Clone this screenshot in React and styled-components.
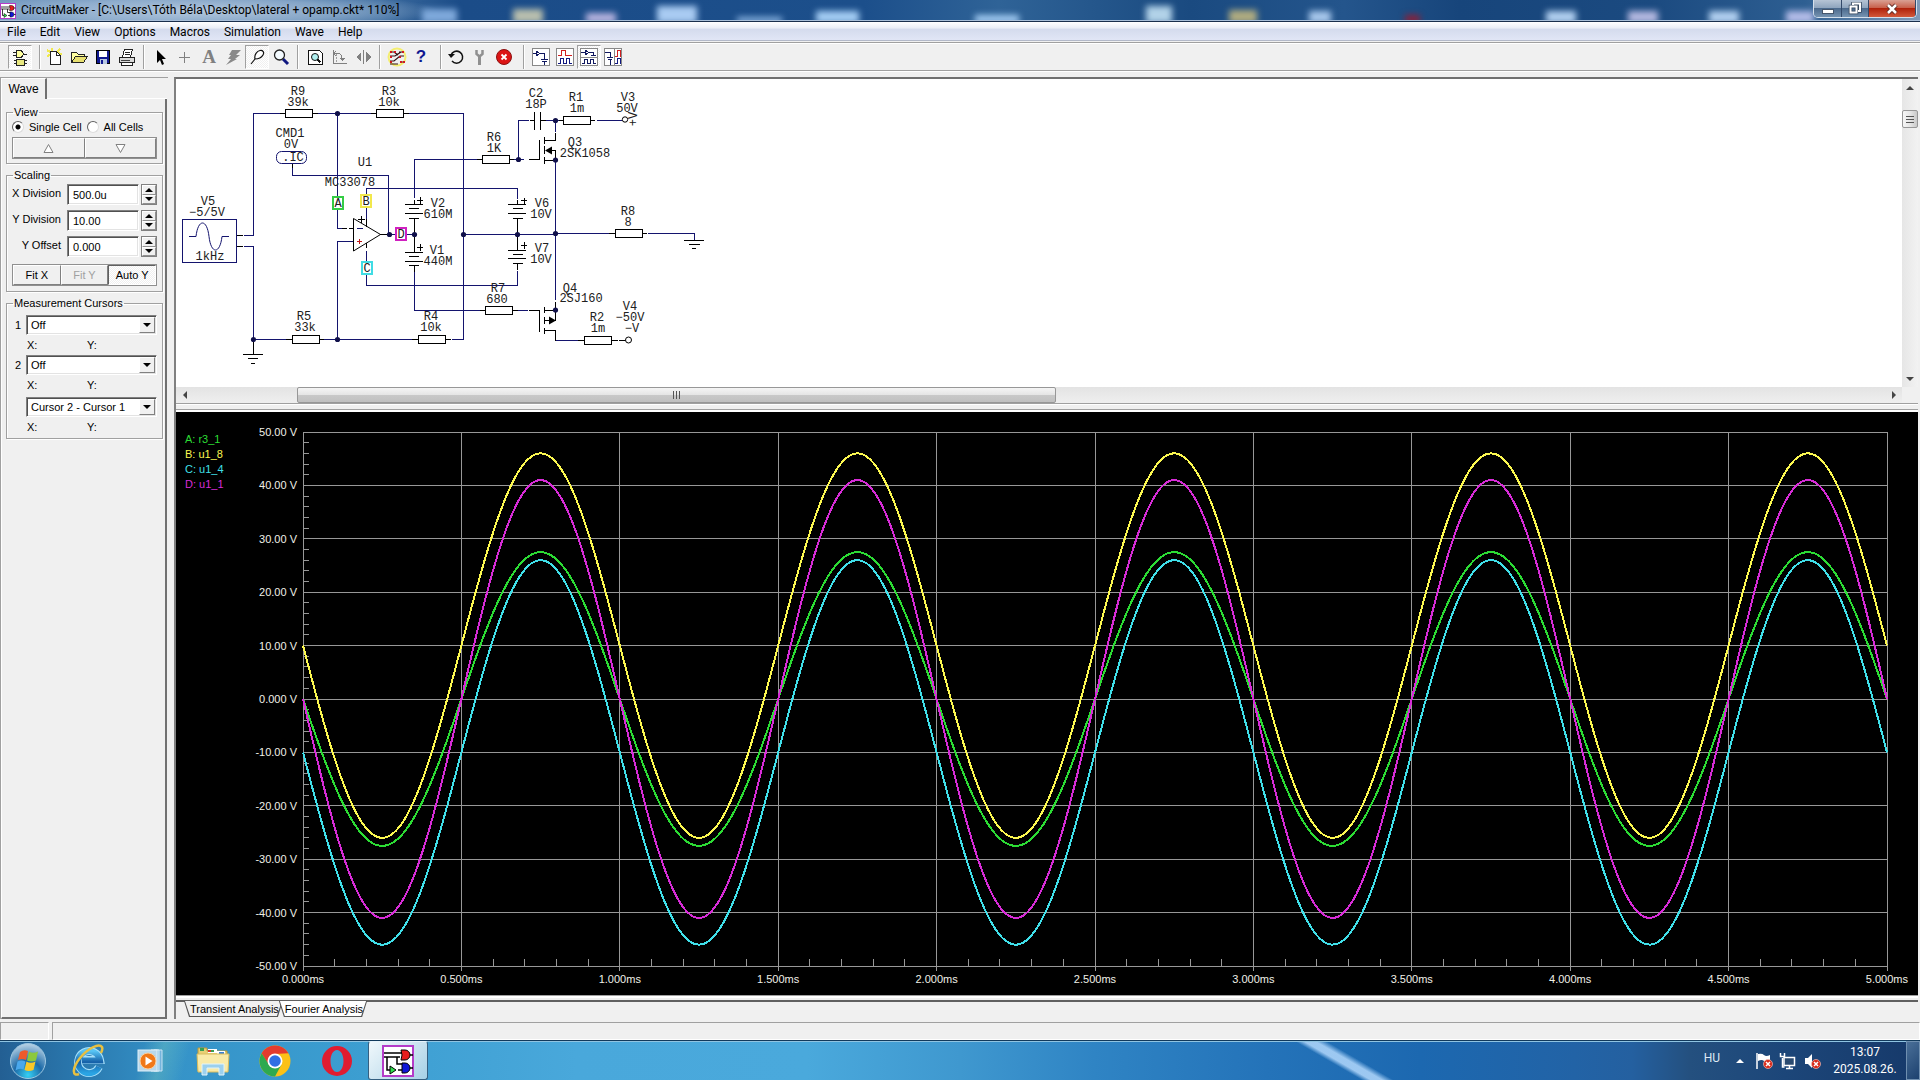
import React from "react";
import styled, { createGlobalStyle, css } from "styled-components";

const SANS = '"Liberation Sans", Arial, sans-serif';
const SHELL = 'Roboto, "Noto Sans", sans-serif';
const MONO = '"Liberation Mono", "Courier New", monospace';
const NAVY = "#14146e";

const GlobalStyle = createGlobalStyle`
  *, *::before, *::after { box-sizing: border-box; }
  html, body, #root { margin: 0; height: 100%; }
  body { background: #f0f0f0; color: #000; font: 11px/14px ${SANS}; overflow: hidden; }
  button, input, select { font: inherit; color: inherit; margin: 0; padding: 0; border-radius: 0; }
  svg { display: block; }
`;

const Desktop = styled.div`
  display: flex;
  flex-direction: column;
  height: 100vh;
  min-height: 640px;
  background: #f0f0f0;
`;

/* ---------- title bar ---------- */

const TitleBar = styled.header`
  display: flex;
  align-items: stretch;
  height: 22px;
  flex: none;
  border-bottom: 1px solid #1a2f4c;
  box-shadow: inset 0 -1px 0 #a9bfd8;
  background:
    radial-gradient(ellipse 240px 20px at 200px 11px, rgba(196, 212, 230, 0.85), rgba(170, 195, 220, 0.6) 60%, transparent 100%),
    linear-gradient(90deg, #7297bf 0, #3d6c9f 380px, #1b4c88 460px, #1c4f8b 45%, #2f6397 52%, #1a4a80 62%, #24558c 70%, #17457b 76%, #1b4a80 86%, #2e5f92 94%, #7f9ab8 100%);
  position: relative;
`;

const Glints = styled.div`
  position: absolute;
  inset: 0 0 1px;
  overflow: hidden;
`;

const Glint = styled.i`
  position: absolute;
  bottom: -3px;
  left: ${(p) => p.$x}%;
  width: ${(p) => p.$w}px;
  height: ${(p) => p.$h}px;
  background: ${(p) => p.$c};
  filter: blur(3px);
`;

const Title = styled.h1`
  display: flex;
  align-items: center;
  gap: 5px;
  flex: 1;
  margin: 0;
  font: 12px/21px ${SHELL};
  white-space: pre;
  position: relative;
`;

const WindowButtons = styled.div`
  display: flex;
  height: 18px;
  margin-right: 3px;
  border: 1px solid #d5e0ec;
  border-top: 0;
  border-radius: 0 0 5px 5px;
  overflow: hidden;
  position: relative;
`;

const WindowButton = styled.button`
  width: ${(p) => p.$w}px;
  display: grid;
  place-items: center;
  border: 0;
  border-right: 1px solid #33496a;
  background: ${(p) =>
    p.$close
      ? "linear-gradient(#d9a093, #c8614c 45%, #b0220b 50%, #d2593a)"
      : "linear-gradient(#b6c4d5, #8fa5be 45%, #4c6a8d 50%, #7593b1)"};
`;

/* ---------- menu and toolbar ---------- */

const MenuBar = styled.nav`
  display: flex;
  height: 19px;
  flex: none;
  margin-bottom: 1px;
  border-bottom: 1px solid #b2b8c8;
  background: linear-gradient(#fff, #e9edf6 35%, #d4dbed 38%, #e1e6f6);
`;

const MenuItem = styled.button`
  border: 0;
  background: none;
  padding: 2px 7px 0;
  font: 12px/16px ${SHELL};
`;

const Toolbar = styled.div`
  display: flex;
  align-items: center;
  height: 30px;
  flex: none;
  padding-left: 8px;
  margin-bottom: 5px;
  border-top: 1px solid #a0a0a0;
  border-bottom: 1px solid #fff;
  box-shadow: inset 0 1px 0 #fff, inset 0 -1px 0 #a0a0a0;
`;

const Group = styled.div`
  display: flex;
`;

const Separator = styled.i`
  width: 2px;
  height: 24px;
  margin: 0 ${(p) => p.$after}px 0 ${(p) => p.$before}px;
  border-left: 1px solid #a0a0a0;
  border-right: 1px solid #fff;
`;

const checker = css`
  background: repeating-conic-gradient(#fff 0 25%, #f0f0f0 0 50%) 0 0 / 2px 2px;
`;

const Tool = styled.button`
  width: 24px;
  height: 24px;
  display: grid;
  place-items: center;
  border: 1px solid transparent;
  background: none;
  ${(p) =>
    p.$pressed &&
    css`
      ${checker}
      border-color: #a0a0a0 #fff #fff #a0a0a0;
    `}
`;

/* ---------- work area ---------- */

const Workspace = styled.main`
  display: flex;
  flex: 1;
  min-height: 0;
  gap: 6px;
  padding: 0 2px 3px 0;
`;

const Sidebar = styled.aside`
  display: flex;
  flex-direction: column;
  width: 168px;
  flex: none;
  padding: 0 1px 0 0;
  border-top: 1px solid #a0a0a0;
  border-left: 1px solid #a0a0a0;
`;

const TabRow = styled.div`
  display: flex;
  height: 21px;
`;

const SideTab = styled.button`
  width: 46px;
  border: 0;
  border-top: 1px solid #fff;
  border-left: 1px solid #fff;
  border-right: 2px solid #707070;
  background: #f0f0f0;
  font-size: 12px;
`;

const TabFill = styled.i`
  flex: 1;
  border-bottom: 1px solid #fff;
`;

const TabPage = styled.div`
  display: flex;
  flex-direction: column;
  gap: 4px;
  flex: 1;
  padding: 6px 2px 0 4px;
  border-left: 1px solid #fff;
  border-right: 2px solid #707070;
  border-bottom: 2px solid #707070;
`;

const GroupBox = styled.fieldset`
  margin: 0;
  padding: 0 5px ${(p) => p.$pad}px;
  min-width: 0;
  border: 1px solid #a0a0a0;
  box-shadow: 1px 1px 0 #fff, inset 1px 1px 0 #fff;
`;

const Legend = styled.legend`
  margin-left: 1px;
  padding: 0 1px;
  height: 14px;
  line-height: 14px;
`;

const RadioRow = styled.div`
  display: flex;
  gap: 5px;
  height: 16px;
`;

const RadioLabel = styled.label`
  display: flex;
  align-items: center;
  gap: 5px;
  white-space: nowrap;
`;

const Radio = styled.input`
  appearance: none;
  width: 12px;
  height: 12px;
  border: 1px solid;
  border-color: #606060 #ddd #ddd #606060;
  border-radius: 50%;
  background: #fff;
  &:checked {
    background: radial-gradient(circle, #000 2px, #fff 3px);
  }
`;

const ButtonRow = styled.div`
  display: flex;
  margin-top: ${(p) => p.$top}px;
  border: 1px solid #909090;
`;

const PushButton = styled.button`
  flex: 1;
  height: 20px;
  display: grid;
  place-items: center;
  border: 1px solid;
  border-color: #fff #808080 #808080 #fff;
  background: #f0f0f0;
  font-size: 11px;
  color: ${(p) => (p.disabled ? "#a0a0a0" : "#000")};
  ${(p) =>
    p.$pressed &&
    css`
      ${checker}
      border-color: #606060 #fff #fff #606060;
    `}
`;

const FieldRow = styled.div`
  display: flex;
  align-items: center;
  margin-top: ${(p) => p.$top}px;
  height: 21px;
`;

const FieldLabel = styled.label`
  flex: 1;
  text-align: right;
  padding-right: 6px;
  line-height: 18px;
  align-self: flex-start;
  white-space: nowrap;
`;

const sunken = css`
  border: 1px solid;
  border-color: #808080 #fff #fff #808080;
  box-shadow: inset 1px 1px 0 #505050, inset -1px -1px 0 #e3e3e3;
  background: #fff;
`;

const Field = styled.input`
  width: 72px;
  height: 21px;
  padding-left: 5px;
  ${sunken}
`;

const Spinner = styled.div`
  display: flex;
  flex-direction: column;
  width: 16px;
  height: 21px;
  margin-left: 2px;
  border: 1px solid #808080;
`;

const SpinButton = styled.button`
  flex: 1;
  min-height: 0;
  display: grid;
  place-items: center;
  border: 1px solid;
  border-color: #fff #909090 #909090 #fff;
  background: #f0f0f0;
`;

const CursorBlock = styled.div`
  display: grid;
  grid-template-columns: 14px 1fr;
  align-items: center;
  margin-top: ${(p) => p.$top}px;
`;

const CursorLabel = styled.label`
  padding-left: 3px;
`;

const SelectBox = styled.div`
  display: flex;
  height: 20px;
  ${sunken}
  padding: 1px;
`;

const Select = styled.select`
  flex: 1;
  width: 100%;
  appearance: none;
  border: 0;
  padding-left: 3px;
  background: #fff;
`;

const SelectArrow = styled.i`
  display: grid;
  place-items: center;
  width: 16px;
  flex: none;
  border: 1px solid;
  border-color: #fff #808080 #808080 #fff;
  background: #f0f0f0;
  pointer-events: none;
`;

const Readout = styled.div`
  grid-column: 2;
  display: grid;
  grid-template-columns: 60px 1fr;
  height: 20px;
  line-height: 20px;
  padding-left: 1px;
`;

/* ---------- panes ---------- */

const Panes = styled.section`
  flex: 1;
  min-width: 0;
  display: flex;
  flex-direction: column;
  border-left: 2px solid #808080;
  border-top: 2px solid #707070;
`;

const SchematicPane = styled.div`
  display: grid;
  grid-template-columns: 1fr 16px;
  grid-template-rows: 308px 16px;
  flex: none;
  background: #f0f0f0;
`;

const Sheet = styled.div`
  overflow: hidden;
  background: #fff;
`;

const VScroll = styled.div`
  display: grid;
  grid-template-rows: 17px 14px 18px 1fr 17px;
  justify-items: stretch;
  background: linear-gradient(90deg, #e6e6e6, #f2f2f2);
`;

const HScroll = styled.div`
  display: grid;
  grid-template-columns: 17px 6fr 44fr 48fr 17px;
  background: linear-gradient(#e3e3e3, #efefef);
`;

const ScrollArrow = styled.button`
  display: grid;
  place-items: center;
  border: 0;
  background: none;
`;

const Thumb = styled.div`
  display: grid;
  place-items: center;
  border: 1px solid #979797;
  border-radius: 2px;
  background: ${(p) =>
    p.$vertical
      ? "linear-gradient(90deg, #f5f5f5, #e6e6e6 50%, #c9c9c9)"
      : "linear-gradient(#f5f5f5, #e4e4e4 50%, #c8c8c8 52%, #c0c0c0)"};
`;

const Splitter = styled.div`
  height: 9px;
  flex: none;
  border-top: 1px solid #a0a0a0;
  border-bottom: 2px solid #fff;
  box-shadow: inset 0 1px 0 #fff, inset 0 -1px 0 #a0a0a0;
  background: #f0f0f0;
`;

const Scope = styled.div`
  flex: 1;
  min-height: 0;
  display: grid;
  grid-template-columns: 70px 51px 6px 1fr 31px;
  grid-template-rows: 20px 1fr 29px;
  background: #000;
  color: #f0f0e8;
`;

const TraceList = styled.ul`
  grid-area: 2 / 1;
  list-style: none;
  margin: 0;
  padding: 0 0 0 9px;
  line-height: 15px;
`;

const Trace = styled.li`
  color: ${(p) => p.$c};
`;

const YAxis = styled.div`
  grid-area: 2 / 2;
  display: flex;
  flex-direction: column;
  justify-content: space-between;
  text-align: right;
`;

const YLabel = styled.span`
  height: 0;
  line-height: 0;
  white-space: nowrap;
`;

const XAxis = styled.div`
  grid-area: 3 / 4;
  display: flex;
  justify-content: space-between;
  padding-top: 6px;
`;

const XLabel = styled.span`
  width: 0;
  display: flex;
  justify-content: center;
  white-space: nowrap;
`;

const Plot = styled.svg`
  grid-area: 2 / 4;
  width: 100%;
  height: 100%;
  overflow: visible;
`;

const SheetTabs = styled.div`
  display: flex;
  height: 24px;
  flex: none;
  padding: 6px 0 0 8px;
  background:
    linear-gradient(#606060, #606060) 0 5px / 100% 2px no-repeat,
    linear-gradient(#a0a0a0 1px, #fff 1px, #fff 3px, #f0f0f0 3px);
`;

const SheetTab = styled.button`
  position: relative;
  height: 16px;
  padding: 0 4px 0 6px;
  margin-right: -4px;
  border: 0;
  background: none;
  line-height: 16px;
  white-space: nowrap;
  &::before {
    content: "";
    position: absolute;
    inset: 0;
    background: #555;
    clip-path: polygon(0 0, 100% 0, calc(100% - 5px) 100%, 5px 100%);
  }
  &::after {
    content: "";
    position: absolute;
    inset: 0 1px 1px 1px;
    background: ${(p) => (p.$active ? "#f0f0f0" : "#fff")};
    clip-path: polygon(0 0, 100% 0, calc(100% - 5px) 100%, 5px 100%);
  }
`;

const SheetTabText = styled.span`
  position: relative;
  z-index: 1;
`;

const StatusBar = styled.footer`
  display: flex;
  gap: 3px;
  height: 18px;
  flex: none;
`;

const StatusCell = styled.div`
  width: ${(p) => (p.$w ? p.$w + "px" : "auto")};
  flex: ${(p) => (p.$w ? "none" : 1)};
  border: 1px solid;
  border-color: #a0a0a0 #fff #fff #a0a0a0;
`;

/* ---------- taskbar ---------- */

const Taskbar = styled.div`
  display: flex;
  align-items: stretch;
  height: 40px;
  flex: none;
  border-top: 1px solid #123a5c;
  box-shadow: inset 0 1px 0 #8fc4e2;
  background:
    linear-gradient(30deg, transparent 43%, rgba(170, 210, 248, 0.9) 47%, rgba(170, 210, 248, 0.9) 52%, transparent 57%) 1264px 0 / 160px 100% no-repeat,
    linear-gradient(105deg, transparent 140px, rgba(150, 230, 190, 0.25) 160px, transparent 185px),
    linear-gradient(90deg, #235f93 0, #2a78ae 4%, #3593c8 9%, #3b9dd0 18%, #49a8db 30%, #4aa9dc 42%, #3f98cf 50%, #2f84c4 57%, #2473b9 66%, #1c68b0 74%, #2263a6 82%, #2460a0 85%, #24507f 88%, #1c4679 93%, #16396a 100%);
`;

const TaskButton = styled.button`
  width: ${(p) => p.$w}px;
  display: grid;
  place-items: center;
  border: 1px solid ${(p) => (p.$active ? "#355f80" : "transparent")};
  border-top-color: ${(p) => (p.$active ? "#e8f5fc" : "transparent")};
  border-radius: 3px;
  background: ${(p) => (p.$active ? "linear-gradient(135deg, #f0f8fc, #c5e0ee 60%, #a5d0e6)" : "none")};
`;

const Tray = styled.div`
  display: flex;
  align-items: center;
  margin-left: auto;
  color: #fff;
  font: 12px/17px ${SHELL};
`;

const Language = styled.span`
  margin-right: 16px;
  padding-bottom: 5px;
  color: #dfe9f3;
`;

const TrayIcons = styled.div`
  display: flex;
  margin-left: 8px;
`;

const TrayButton = styled.button`
  width: 24px;
  height: 24px;
  display: grid;
  place-items: center;
  border: 0;
  background: none;
`;

const Clock = styled.time`
  width: 82px;
  text-align: center;
  padding-top: 1px;
`;

const ShowDesktop = styled.button`
  width: 14px;
  align-self: stretch;
  border: 1px solid #6f8fb0;
  background: linear-gradient(135deg, #4a6f98, #1c416f);
`;

/* ---------- drawings ---------- */

const Crisp = ({ w = 20, h = 20, children }) => (
  <svg width={w} height={h} viewBox={`0 0 ${w} ${h}`} fill="none" shapeRendering="crispEdges" aria-hidden="true">
    {children}
  </svg>
);

const AppIcon = ({ size }) => (
  <svg width={size} height={size} viewBox="0 0 32 32" fill="none" aria-hidden="true">
    <rect x="1" y="1" width="30" height="30" fill="#fff" stroke="#b43cc8" strokeWidth="2" />
    <path d="M2 8h18M2 12h16M5 12v13h3M15 12v7h5M28 10h3M28 23h3M16 25h4" stroke="#000" strokeWidth="1.5" />
    <path d="M19 5h4a5 5 0 0 1 0 10h-4q2-5 0-10z" fill="#e81c1c" stroke="#000" />
    <path d="M20 18h3a5 5 0 0 1 0 10h-3z" fill="#1018d8" stroke="#000" />
    <path d="M8 21l6 4-6 4z" fill="#30e050" stroke="#000" />
  </svg>
);

const icons = {
  parts: (
    <Crisp>
      <path d="M6 3.500h5l3 3.500-3 3.500H6z" fill="#ffffa0" stroke="#222" />
      <path d="M3 5.500h3M3 8.500h3M14 7h3M4 13.500h2M4 16.500h2M14 13.500h3M14 16.500h3" stroke="#222" />
      <rect x="6.500" y="12.500" width="8" height="6" fill="#e8e880" stroke="#222" />
    </Crisp>
  ),
  fresh: (
    <Crisp>
      <path d="M2 3l3 2M15 2l-3 3M13 6l4 1M2 9l3-1M7 1v3M16 13l-3-2" stroke="#f0e850" strokeWidth="2" />
      <path d="M5.500 4.500h6l4 4v9h-10z" fill="#fff" stroke="#222" />
      <path d="M11.500 4.500v4h4" stroke="#222" />
    </Crisp>
  ),
  open: (
    <Crisp>
      <path d="M2.500 15.500v-10h5l2 2h6v3" fill="#ffffa0" stroke="#222" />
      <path d="M2.500 15.500l4-6h12l-4 6z" fill="#e8e070" stroke="#222" />
    </Crisp>
  ),
  save: (
    <Crisp>
      <rect x="3.500" y="3.500" width="13" height="13" fill="#101890" stroke="#000" />
      <rect x="6" y="4" width="8" height="6" fill="#fff" />
      <rect x="7" y="12" width="7" height="5" fill="#b8c8e0" />
      <rect x="8" y="13" width="2" height="4" fill="#101890" />
    </Crisp>
  ),
  print: (
    <Crisp>
      <path d="M5.500 10l2-7.500h8l-2 7.500" fill="#fff" stroke="#222" />
      <path d="M8 5.500h5M7.500 7.500h5" stroke="#222" />
      <path d="M2.500 10.500h15v5h-15z" fill="#d8d8d8" stroke="#222" />
      <path d="M4.500 15.500h11v3h-11z" fill="#fff" stroke="#222" />
      <path d="M4 13h9" stroke="#444" />
    </Crisp>
  ),
  select: (
    <svg width="20" height="20" viewBox="0 0 20 20">
      <path d="M6 3v13l3-3 2 5 2-1-2-5h4z" fill="#000" />
    </svg>
  ),
  wire: (
    <Crisp>
      <path d="M4 10h11M9.500 4.500v11" stroke="#808080" />
    </Crisp>
  ),
  bolt: (
    <svg width="20" height="20" viewBox="0 0 20 20">
      <path d="M9 3h9l-5 5h4l-5 4h2L3 18l5-6H5l3-4H6z" fill="#8a8a8a" />
    </svg>
  ),
  probe: (
    <svg width="20" height="20" viewBox="0 0 20 20" fill="#fff" stroke="#111">
      <path d="M4 17l4-5M8 12c-1-4 2-8 5-8.500 3-.5 4.500 2 3 4.500s-4.500 4-8 4z" strokeWidth="1.200" />
    </svg>
  ),
  zoom: (
    <svg width="20" height="20" viewBox="0 0 20 20" fill="none">
      <path d="M12 12l5 5" stroke="#101880" strokeWidth="3" />
      <circle cx="8.500" cy="8" r="5" fill="#f4fbff" stroke="#222" strokeWidth="1.300" />
    </svg>
  ),
  fit: (
    <Crisp>
      <path d="M3.500 3.500h11l3 3v11h-14z" fill="#fff" stroke="#111" strokeWidth="1" />
      <circle cx="10" cy="10" r="3.500" fill="#b0f0f0" stroke="#111" shapeRendering="auto" />
      <path d="M12.500 12.500l3 3" stroke="#111" strokeWidth="2" />
    </Crisp>
  ),
  rotate: (
    <Crisp>
      <path d="M4.500 3v13.500H18M4 6.500h5a4 4 0 0 1 4 4M7 4l-2.500 2.500L7 9" stroke="#808080" />
      <path d="M10.500 11h6l-3 3.500z" fill="#808080" />
      <path d="M7.500 7v9" stroke="#a0a0a0" strokeDasharray="2 1" />
    </Crisp>
  ),
  flip: (
    <Crisp>
      <path d="M10.500 3v14" stroke="#808080" />
      <path d="M8 5v10l-5-5zM13 5v10l5-5z" fill="#808080" />
    </Crisp>
  ),
  nets: (
    <svg width="20" height="20" viewBox="0 0 20 20" fill="none">
      <circle cx="10" cy="10" r="8.500" stroke="#f4ee70" strokeWidth="2" />
      <path d="M3 5h4l4 3M12 5h5M3 9h5l6-4M3 14h4l6-5h4M13 15h4M3 17h8" stroke="#301010" strokeWidth="1.200" />
      <path d="M3 4h2v2H3zM15 4h2v2h-2zM7 4h2v2H7zM12 9h2v2h-2zM3 9h2v2H3zM3 14h2v2H3zM13 14h2v2h-2zM16 14h2v2h-2z" fill="#d01820" />
    </svg>
  ),
  reset: (
    <svg width="20" height="20" viewBox="0 0 20 20" fill="none" stroke="#111" strokeWidth="1.500">
      <path d="M5 8a6 6 0 1 1 1 6" />
      <path d="M2 7h7l-4 4z" fill="#111" stroke="none" />
    </svg>
  ),
  wrench: (
    <svg width="20" height="20" viewBox="0 0 20 20" fill="none" stroke="#909090">
      <path d="M6.500 3v4l3 2.500 3-2.500V3" strokeWidth="2.500" />
      <path d="M9.500 9v9" strokeWidth="3" />
    </svg>
  ),
  stop: (
    <svg width="20" height="20" viewBox="0 0 20 20">
      <circle cx="10" cy="10" r="7.500" fill="#dc1414" stroke="#8c1010" />
      <path d="M7.500 7.500l5 5M12.500 7.500l-5 5" stroke="#fff" strokeWidth="1.800" />
    </svg>
  ),
  viewA: (
    <Crisp>
      <rect x="1.500" y="1.500" width="17" height="17" fill="#fff" stroke="#888" />
      <path d="M2 6.500h3M5 4v5l4-2.500zM9 6.500h4.500V12M10 12.500h7M11 14.500h5M13.500 15v3" stroke="#101860" />
    </Crisp>
  ),
  viewB: (
    <Crisp>
      <rect x="1.500" y="1.500" width="17" height="17" fill="#fff" stroke="#888" />
      <path d="M3 8.500h3v-5h4v5h7" stroke="#d02020" />
      <path d="M3 16.500h2v-5h3v5h3v-5h3v5h3" stroke="#101880" />
    </Crisp>
  ),
  viewC: (
    <Crisp>
      <rect x="1.500" y="1.500" width="17" height="17" fill="#fff" stroke="#888" />
      <path d="M2 5.500h4M6 3v5l4-2.500zM10 5.500h4V8M12 8.500h5M3 16.500h2v-4h3v4h3v-4h3v4h3" stroke="#101860" />
      <path d="M2 10.500h16" stroke="#888" />
    </Crisp>
  ),
  viewD: (
    <Crisp>
      <rect x="1.500" y="1.500" width="17" height="17" fill="#fff" stroke="#888" />
      <path d="M2 5.500h5V10M4 10.500h6M5 12.500h4M7 13v5" stroke="#101860" />
      <path d="M11.500 2v16" stroke="#888" />
      <path d="M12 9.500h2v-6h3v6" stroke="#d02020" />
      <path d="M12 16.500h2v-5h3v5" stroke="#101880" />
    </Crisp>
  ),
};

const Glyph = styled.span`
  font: ${(p) => p.$font};
  color: ${(p) => p.$c};
`;

const Tri = ({ dir, size = 4, color = "#000" }) => {
  const d = { up: "M0 8L8 0l8 8z", down: "M0 0h16L8 8z", left: "M8 0v16L0 8z", right: "M0 0v16l8-8z" }[dir];
  const flat = dir === "up" || dir === "down";
  return (
    <svg
      width={flat ? size * 2 : size}
      height={flat ? size : size * 2}
      viewBox={flat ? "0 0 16 8" : "0 0 8 16"}
      aria-hidden="true"
    >
      <path d={d} fill={color} />
    </svg>
  );
};

const HollowTri = ({ down }) => (
  <svg width="11" height="11" viewBox="0 0 11 11" fill="#fff" stroke="#808080" aria-hidden="true">
    <path d={down ? "M1 1.500h9l-4.500 8z" : "M1 9.500h9l-4.500-8z"} />
  </svg>
);

/* ---------- schematic ---------- */

const wires = [
  "M245 235.500h9.500V113.500h27M319 113.500h53M410 113.500h54.500V339.500h-12",
  "M245 246.500h9.500v93h33M325 339.500h88M338.500 113.500v83M338.500 210v18.500h4M354 241.500h-15.500v98",
  "M293.500 168v7.500h96v59M367.500 219V188.500h151v10M367.500 251v34.500h151v-15",
  "M415.500 198V159.500h62M415.500 272v38.500h65M515 159.500h10M519.500 159.500v-39h10M547 120.500h14M556.500 120.500v11",
  "M598 120.500h25M556.500 160v140M464 234.500h92M556 233.500h54M649 233.500h46.500v6M519 310.500h10M556.500 340.500h22M390 234.500h26",
];

const leads = [
  "M238 235.500h6M238 246.500h6M254.500 340v14.500M244 354.500h20M249 358.500h10M252 363.500h4",
  "M281 113.500h6M313 113.500h6M372 113.500h6M404 113.500h6M287 339.500h6M320 339.500h5M413 339.500h6M446 339.500h6",
  "M343 228.500h5M350 228.500h4M381 234.500h7M293.500 164v4M367.500 219v8M367.500 243v5",
  "M415.500 200v4M415.500 218v34M415.500 265v7M518.500 200v4M518.500 218v32M518.500 263v7",
  "M406 204.500h18M410 208.500h10M406 213.500h18M410 218.500h10M406 252.500h18M410 256.500h10M406 261.500h18M410 265.500h10",
  "M509 204.500h18M514 208.500h10M509 213.500h18M514 218.500h10M509 250.500h18M514 254.500h10M509 258.500h18M514 263.500h10",
  "M478 159.500h5M510 159.500h5M481 310.500h5M514 310.500h5M530 310.500h10.500v21M530 159.500h10.500v-19.500",
  "M531 120.500h5M535.500 112v18M541.500 112v18M542 120.500h5M560 120.500h4M592 120.500h4",
  "M545.500 137v7M545.500 146v8M545.500 157v7M545 140.500h11.500v-8M550 150.500h6.500v9.500h-11",
  "M545.500 307v6M545.500 317v7M545.500 328v6M545 310.500h11.500v-9M545 320.500h11.500v-10M545 330.500h11.500v10",
  "M610 233.500h6M643 233.500h5M685 240.500h20M690 244.500h11M693 248.500h4M579 340.500h6M613 340.500h6M620 340.500h7",
  "M359 219.500h7M362.500 216v7M418 200.500h6M421.500 197v7M418 247.500h6M421.500 244v7M522 200.500h6M525 197.500v6M522 245.500h6M525 242v7",
];

const resistors = [
  [286.5, 109.5], [377.5, 109.5], [293.5, 335.5], [419.5, 335.5], [483.5, 155.5],
  [486.5, 306.5], [564.5, 116.5], [585.5, 336.5], [616.5, 229.5],
];

const nodes = [
  [338.5, 113.5], [254.5, 339.5], [338.5, 339.5], [390.5, 234.5], [415.5, 234.5], [464.5, 234.5],
  [518.5, 234.5], [556.5, 233.5], [519.5, 159.5], [556.5, 120.5], [556.5, 160], [556.5, 310],
];

const probes = [
  ["A", 339, 203, "#34cc44"],
  ["B", 367, 201, "#f2e84c"],
  ["C", 368, 268, "#40dce4"],
  ["D", 402, 234, "#d020c0"],
];

const partLabels = [
  ["R9", 299, 95], ["39k", 299, 106], ["R3", 390, 95], ["10k", 390, 106], ["CMD1", 291, 137], ["0V", 292, 148],
  [".IC", 294, 161], ["U1", 366, 166], ["MC33078", 351, 186], ["V5", 209, 205], ["−5/5V", 208, 216], ["1kHz", 211, 260],
  ["R5", 305, 320], ["33k", 306, 331], ["R4", 432, 320], ["10k", 432, 331], ["V2", 439, 207], ["610M", 439, 218],
  ["V1", 438, 254], ["440M", 439, 265], ["C2", 537, 97], ["18P", 537, 108], ["R1", 577, 101], ["1m", 578, 112],
  ["V3", 629, 101], ["50V", 628, 112], ["R6", 495, 141], ["1K", 495, 152], ["Q3", 576, 146], ["2SK1058", 586, 157],
  ["V6", 543, 207], ["10V", 542, 218], ["V7", 543, 252], ["10V", 542, 263], ["R8", 629, 215], ["8", 629, 226],
  ["R7", 499, 292], ["680", 498, 303], ["Q4", 571, 292], ["2SJ160", 582, 302], ["V4", 631, 310], ["−50V", 631, 321],
  ["−V", 633, 332], ["R2", 598, 321], ["1m", 599, 332],
];

const SchematicText = styled.text`
  font: 12px ${MONO};
  text-anchor: middle;
  fill: #202020;
`;

const Schematic = () => (
  <svg width="560" height="308" viewBox="177 79 560 308" fill="none" role="img" aria-label="Amplifier schematic">
    <g shapeRendering="crispEdges">
      <path d={wires.join("")} stroke={NAVY} />
      <path d={leads.join("")} stroke="#000" />
      <rect x="183.500" y="219.500" width="54" height="43" fill="#fff" stroke={NAVY} />
      {resistors.map(([x, y]) => (
        <rect key={x} x={x} y={y} width="27" height="8" fill="#fff" stroke="#000" />
      ))}
      {probes.map(([n, x, y, c]) => (
        <rect key={n} x={x - 5} y={y - 6} width="10" height="12" fill="#fff" stroke={c} strokeWidth="2" />
      ))}
      <path d="M358 228.500h6" stroke={NAVY} />
      <path d="M358 241.500h5M360.500 239v5" stroke="#c01818" />
    </g>
    <rect x="277.500" y="151.500" width="30" height="12" rx="5" fill="#fff" stroke={NAVY} />
    <path d="M190 236.500h7c2-18 11-18 13 0s11 18 13 0h7" stroke={NAVY} />
    <path d="M354.500 218.500v32.500l27-16.500z" stroke="#000" />
    <path d="M546 150.500l7-4v8zM557 320.500l-7-4v8z" fill="#000" />
    {nodes.map(([x, y]) => (
      <circle key={`${x}-${y}`} cx={x} cy={y} r="2.600" fill="#10104a" />
    ))}
    <circle cx="626" cy="119.500" r="2.700" fill="#fff" stroke="#000" />
    <circle cx="629.500" cy="340" r="3" fill="#fff" stroke="#000" />
    {partLabels.map(([t, x, y]) => (
      <SchematicText key={`${x}-${y}`} x={x} y={y}>
        {t}
      </SchematicText>
    ))}
    {probes.map(([n, x, y]) => (
      <SchematicText key={n} x={x} y={y + 4}>
        {n}
      </SchematicText>
    ))}
    <SchematicText transform="translate(638 119) rotate(-90)">+V</SchematicText>
  </svg>
);

/* ---------- oscilloscope ---------- */

const PLOT_W = 1584;
const PLOT_H = 534;

const traces = [
  { name: "A: r3_1", color: "#2cdc34", amp: 27.5, bias: 0 },
  { name: "B: u1_8", color: "#fcf850", amp: 36, bias: 10 },
  { name: "C: u1_4", color: "#40e0ea", amp: 36, bias: -10 },
  { name: "D: u1_1", color: "#d82cd8", amp: 41, bias: 0 },
];

const tracePath = ({ amp, bias }) => {
  const pts = [];
  for (let x = 0; x <= PLOT_W; x += 3) {
    const v = bias - amp * Math.sin((x / PLOT_W) * 10 * Math.PI);
    pts.push(`${x} ${(PLOT_H / 2 - (v * PLOT_H) / 100).toFixed(1)}`);
  }
  return "M" + pts.join("L");
};

const range = (n) => Array.from({ length: n }, (_, i) => i);
const volts = range(11).map((i) => 50 - i * 10);
const voltText = (v) => `${v === 0 ? "0.000" : v.toFixed(2)} V`;

const gridPath =
  range(11).map((i) => `M${(i * PLOT_W) / 10} 0V${PLOT_H + 5}M0 ${(i * PLOT_H) / 10}H${PLOT_W}`).join("") +
  range(50).map((i) => `M0 ${(i * PLOT_H) / 50}h6M${(i * PLOT_W) / 50} ${PLOT_H}v-7`).join("");

const ScopeView = () => (
  <Scope>
    <TraceList>
      {traces.map((t) => (
        <Trace key={t.name} $c={t.color}>
          {t.name}
        </Trace>
      ))}
    </TraceList>
    <YAxis>
      {volts.map((v) => (
        <YLabel key={v}>{voltText(v)}</YLabel>
      ))}
    </YAxis>
    <Plot viewBox={`0 0 ${PLOT_W} ${PLOT_H}`} preserveAspectRatio="none" fill="none" shapeRendering="crispEdges">
      <path d={gridPath} stroke="#989898" vectorEffect="non-scaling-stroke" />
      {traces.map((t) => (
        <path key={t.name} d={tracePath(t)} stroke={t.color} strokeWidth="2" vectorEffect="non-scaling-stroke" />
      ))}
    </Plot>
    <XAxis>
      {range(11).map((i) => (
        <XLabel key={i}>{`${(i / 2).toFixed(3)}ms`}</XLabel>
      ))}
    </XAxis>
  </Scope>
);

/* ---------- sidebar pieces ---------- */

const NumberField = ({ id, label, value, top }) => (
  <FieldRow $top={top}>
    <FieldLabel htmlFor={id}>{label}</FieldLabel>
    <Field id={id} defaultValue={value} />
    <Spinner>
      <SpinButton aria-label={`${label} up`}>
        <Tri dir="up" />
      </SpinButton>
      <SpinButton aria-label={`${label} down`}>
        <Tri dir="down" />
      </SpinButton>
    </Spinner>
  </FieldRow>
);

const CursorPicker = ({ id, label, value, top }) => (
  <CursorBlock $top={top}>
    <CursorLabel htmlFor={id}>{label}</CursorLabel>
    <SelectBox>
      <Select id={id} aria-label={label ? undefined : "Cursor difference"}>
        <option>{value}</option>
      </Select>
      <SelectArrow>
        <Tri dir="down" />
      </SelectArrow>
    </SelectBox>
    <Readout>
      <span>X:</span>
      <span>Y:</span>
    </Readout>
  </CursorBlock>
);

const toolGroups = [
  { tools: [["Parts", icons.parts, true]] },
  {
    before: 7,
    after: 2,
    tools: [["New", icons.fresh], ["Open", icons.open], ["Save", icons.save], ["Print", icons.print]],
  },
  {
    before: 4,
    after: 4,
    tools: [
      ["Arrow", icons.select],
      ["Wire", icons.wire],
      ["Text", <Glyph $font={'bold 19px/20px "Liberation Serif", serif'} $c="#808080">A</Glyph>],
      ["Delete", icons.bolt],
      ["Probe", icons.probe, true],
      ["Zoom", icons.zoom],
    ],
  },
  { before: 4, after: 4, tools: [["Fit", icons.fit], ["Rotate", icons.rotate], ["Mirror", icons.flip]] },
  {
    before: 4,
    after: 4,
    tools: [["Digital", icons.nets], ["Help", <Glyph $font={`bold 17px/20px ${SANS}`} $c="#101890">?</Glyph>]],
  },
  { before: 7, after: 2, tools: [["Reset", icons.reset], ["Setup", icons.wrench], ["Stop", icons.stop]] },
  {
    before: 7,
    after: 4,
    tools: [["Schematic", icons.viewA], ["Waves", icons.viewB], ["Split", icons.viewC, true], ["Side by side", icons.viewD]],
  },
];

/* ---------- taskbar icons ---------- */

const StartOrb = () => (
  <svg width="38" height="38" viewBox="0 0 38 38" aria-hidden="true">
    <defs>
      <radialGradient id="orb" cx="0.5" cy="0.9" r="0.9">
        <stop offset="0" stopColor="#35d0f4" />
        <stop offset="0.45" stopColor="#1c6aa8" />
        <stop offset="1" stopColor="#bcd4e6" />
      </radialGradient>
    </defs>
    <circle cx="19" cy="19" r="17.500" fill="url(#orb)" stroke="#9cc6e0" />
    <path d="M11 10q4-3 8-1l-2 9q-4-2-8 0z" fill="#ee5a2c" />
    <path d="M20 9.500q4 2.500 9 0l-2 9q-4 2-9 0z" fill="#8cc83c" />
    <path d="M8.500 19.500q4-2 8 0l-2 8q-4-2-8 1z" fill="#4aa8ec" />
    <path d="M17.500 19.500q4 2.500 9 0l-2 8.500q-5 2-9 0z" fill="#f8c828" />
  </svg>
);

const Explorer = () => (
  <svg width="34" height="34" viewBox="0 0 34 34" fill="none" aria-hidden="true">
    <defs>
      <linearGradient id="ie" x1="0" y1="0" x2="0" y2="1">
        <stop offset="0" stopColor="#58c4f4" />
        <stop offset="0.5" stopColor="#1560a8" />
        <stop offset="1" stopColor="#2aa4e4" />
      </linearGradient>
    </defs>
    <path d="M28 23a11 11 0 1 1 1-7H11" stroke="#a8e0fa" strokeWidth="8" />
    <path d="M28 23a11 11 0 1 1 1-6.500H11" stroke="url(#ie)" strokeWidth="6" />
    <path d="M8 30C1 33 1 24 9 14S28-1 31 3c1 2 0 4-1 6" stroke="#e8c040" strokeWidth="2.500" />
  </svg>
);

const Player = () => (
  <svg width="28" height="28" viewBox="0 0 28 28" aria-hidden="true">
    <path d="M17 3h8v21h-8z" fill="#74b4dc" stroke="#c8e4f4" />
    <path d="M14 3h8v21h-8z" fill="#8cc4e4" stroke="#d8ecf8" />
    <rect x="1" y="3" width="19" height="21" fill="#b8d8ec" stroke="#e0f0f8" />
    <circle cx="11" cy="14" r="8" fill="#f07818" stroke="#fbd0a0" />
    <path d="M8.500 9.500v9l7-4.500z" fill="#fff" />
  </svg>
);

const Folder = () => (
  <svg width="34" height="32" viewBox="0 0 34 32" aria-hidden="true">
    <path d="M2 3h9v3h20v20H2z" fill="#e8cf74" stroke="#b89838" />
    <path d="M12 4h9v4h-9zM21 6h8v4h-8z" fill="#fff" />
    <path d="M4 3h4v3H4zM14 5h4v2h-4z" fill="#38a050" />
    <path d="M12 5h3v2h-3z" fill="#d83828" />
    <path d="M23 7h5v2h-5z" fill="#3880d8" />
    <path d="M1 9h32l-1 18H2z" fill="#f9eaa8" stroke="#d8bc60" />
    <path d="M6 30V19h22v11h-5v-7H11v7z" fill="#9cd0ee" stroke="#e0f4fc" />
  </svg>
);

const Chrome = () => (
  <svg width="32" height="32" viewBox="0 0 32 32" aria-hidden="true">
    <circle cx="16" cy="16" r="15.500" fill="#fbc116" />
    <path d="M2.600 8.250A15.500 15.500 0 0 1 29.400 8.250L16 9 9.500 19.500z" fill="#e33b2e" />
    <path d="M2.600 8.250A15.500 15.500 0 0 0 16 31.500L22.500 19.500 16 23 9.900 19.500z" fill="#2da94f" />
    <circle cx="16" cy="16" r="7.500" fill="#fff" />
    <circle cx="16" cy="16" r="5.800" fill="#2f6fe4" />
  </svg>
);

const Opera = () => (
  <svg width="32" height="32" viewBox="0 0 32 32" aria-hidden="true">
    <path
      d="M16 1a15 15 0 1 0 0 30a15 15 0 1 0 0-30zM16 5c4 0 6.500 5 6.500 11s-2.500 11-6.500 11-6.500-5-6.500-11S12 5 16 5z"
      fill="#e01c30"
      fillRule="evenodd"
    />
  </svg>
);

const Alert = () => (
  <g>
    <circle cx="13" cy="12" r="4.500" fill="#d82818" stroke="#f0c0b8" strokeWidth="0.700" />
    <path d="M11 10l4 4M15 10l-4 4" stroke="#fff" strokeWidth="1.500" />
  </g>
);

const glints = [
  [22, 35, 14, "#7fa9db"], [26.7, 30, 14, "#b9bfae"], [30.5, 30, 10, "#b8b4e0"], [34.2, 40, 17, "#a9cbf2"],
  [38.4, 45, 6, "#88b2e0"], [42.5, 43, 12, "#a4cdf4"], [50.8, 44, 8, "#a4cdf4"], [59.7, 26, 17, "#b2d2e8"],
  [64, 28, 13, "#b0ac80"], [68.2, 22, 12, "#a8c8ec"], [73.2, 15, 8, "#8a2038"], [80.5, 30, 12, "#b2d0f0"],
  [84.8, 30, 12, "#b4b8e0"], [89, 30, 12, "#b2d0f0"], [93, 28, 12, "#b4bce8"],
];

export default function App() {
  return (
    <Desktop>
      <GlobalStyle />
      <TitleBar>
        <Glints>
          {glints.map(([x, w, h, c]) => (
            <Glint key={x} $x={x} $w={w} $h={h} $c={c} />
          ))}
        </Glints>
        <Title>
          <AppIcon size={16} />
          {"CircuitMaker - [C:\\Users\\Tóth Béla\\Desktop\\lateral + opamp.ckt* 110%]"}
        </Title>
        <WindowButtons>
          <WindowButton $w={28} aria-label="Minimize">
            <svg width="14" height="12" viewBox="0 0 14 12">
              <rect x="1.500" y="6.500" width="11" height="4" fill="#fff" stroke="#45566c" />
            </svg>
          </WindowButton>
          <WindowButton $w={27} aria-label="Restore">
            <svg width="14" height="13" viewBox="0 0 14 13" fill="none">
              <path d="M5 3V1.500h7V9h-2M2.500 4.500h6v6h-6z" stroke="#34465c" strokeWidth="3.500" />
              <path d="M5 3V1.500h7V9h-2M2.500 4.500h6v6h-6z" stroke="#fff" strokeWidth="2" />
            </svg>
          </WindowButton>
          <WindowButton $w={47} $close aria-label="Close">
            <svg width="12" height="12" viewBox="0 0 12 12">
              <path d="M2 2l8 8M10 2l-8 8" stroke="#5c2a24" strokeWidth="4.500" />
              <path d="M2 2l8 8M10 2l-8 8" stroke="#fff" strokeWidth="2.500" />
            </svg>
          </WindowButton>
        </WindowButtons>
      </TitleBar>
      <MenuBar>
        {["File", "Edit", "View", "Options", "Macros", "Simulation", "Wave", "Help"].map((m) => (
          <MenuItem key={m}>{m}</MenuItem>
        ))}
      </MenuBar>
      <Toolbar>
        {toolGroups.map((g, i) => (
          <React.Fragment key={i}>
            {i > 0 && <Separator $before={g.before} $after={g.after} />}
            <Group>
              {g.tools.map(([name, icon, pressed]) => (
                <Tool key={name} aria-label={name} $pressed={pressed}>
                  {icon}
                </Tool>
              ))}
            </Group>
          </React.Fragment>
        ))}
      </Toolbar>
      <Workspace>
        <Sidebar>
          <TabRow>
            <SideTab>Wave</SideTab>
            <TabFill />
          </TabRow>
          <TabPage>
            <GroupBox $pad={4}>
              <Legend>View</Legend>
              <RadioRow>
                <RadioLabel>
                  <Radio type="radio" name="view" defaultChecked />
                  Single Cell
                </RadioLabel>
                <RadioLabel>
                  <Radio type="radio" name="view" />
                  All Cells
                </RadioLabel>
              </RadioRow>
              <ButtonRow $top={2}>
                <PushButton aria-label="Previous cell">
                  <HollowTri />
                </PushButton>
                <PushButton aria-label="Next cell">
                  <HollowTri down />
                </PushButton>
              </ButtonRow>
            </GroupBox>
            <GroupBox $pad={5}>
              <Legend>Scaling</Legend>
              <NumberField id="xdiv" label="X Division" value="500.0u" top={2} />
              <NumberField id="ydiv" label="Y Division" value="10.00" top={5} />
              <NumberField id="yoff" label="Y Offset" value="0.000" top={5} />
              <ButtonRow $top={7}>
                <PushButton>Fit X</PushButton>
                <PushButton disabled>Fit Y</PushButton>
                <PushButton $pressed>Auto Y</PushButton>
              </ButtonRow>
            </GroupBox>
            <GroupBox $pad={1}>
              <Legend>Measurement Cursors</Legend>
              <CursorPicker id="cursor1" label="1" value="Off" top={5} />
              <CursorPicker id="cursor2" label="2" value="Off" top={0} />
              <CursorPicker id="cursord" label="" value="Cursor 2 - Cursor 1" top={2} />
            </GroupBox>
          </TabPage>
        </Sidebar>
        <Panes>
          <SchematicPane>
            <Sheet>
              <Schematic />
            </Sheet>
            <VScroll>
              <ScrollArrow aria-label="Scroll up"><Tri dir="up" color="#444" /></ScrollArrow>
              <i />
              <Thumb $vertical>
                <Crisp w={8} h={9}><path d="M0 1.500h8M0 4.500h8M0 7.500h8" stroke="#555" /></Crisp>
              </Thumb>
              <i />
              <ScrollArrow aria-label="Scroll down"><Tri dir="down" color="#444" /></ScrollArrow>
            </VScroll>
            <HScroll>
              <ScrollArrow aria-label="Scroll left"><Tri dir="left" color="#444" /></ScrollArrow>
              <i />
              <Thumb>
                <Crisp w={9} h={8}><path d="M1.500 0v8M4.500 0v8M7.500 0v8" stroke="#555" /></Crisp>
              </Thumb>
              <i />
              <ScrollArrow aria-label="Scroll right"><Tri dir="right" color="#444" /></ScrollArrow>
            </HScroll>
          </SchematicPane>
          <Splitter />
          <ScopeView />
          <SheetTabs>
            <SheetTab $active><SheetTabText>Transient Analysis</SheetTabText></SheetTab>
            <SheetTab><SheetTabText>Fourier Analysis</SheetTabText></SheetTab>
          </SheetTabs>
        </Panes>
      </Workspace>
      <StatusBar>
        <StatusCell $w={49} />
        <StatusCell />
      </StatusBar>
      <Taskbar>
        <TaskButton $w={56} aria-label="Start"><StartOrb /></TaskButton>
        <TaskButton $w={64} aria-label="Internet Explorer"><Explorer /></TaskButton>
        <TaskButton $w={62} aria-label="Media Player"><Player /></TaskButton>
        <TaskButton $w={62} aria-label="Explorer"><Folder /></TaskButton>
        <TaskButton $w={62} aria-label="Chrome"><Chrome /></TaskButton>
        <TaskButton $w={62} aria-label="Opera"><Opera /></TaskButton>
        <TaskButton $w={60} $active aria-label="CircuitMaker"><AppIcon size={32} /></TaskButton>
        <Tray>
          <Language>HU</Language>
          <Tri dir="up" color="#fff" />
          <TrayIcons>
            <TrayButton aria-label="Action Center">
              <svg width="18" height="18" viewBox="0 0 18 18"><path d="M2 1v16" stroke="#fff" strokeWidth="1.500" /><path d="M3 2q4-1 6 1t6 0v7q-4 1-6-1t-6 0z" fill="#fff" /><Alert /></svg>
            </TrayButton>
            <TrayButton aria-label="Network">
              <svg width="18" height="18" viewBox="0 0 18 18" fill="none" stroke="#fff"><path d="M5 5.500h10.500v8H5z" strokeWidth="1.500" fill="#2a4a70" /><path d="M7 16.500h7M10.500 13v3M3.500 6v9h2M1.500 1v3.500h4V1" strokeWidth="1.500" /></svg>
            </TrayButton>
            <TrayButton aria-label="Volume">
              <svg width="18" height="18" viewBox="0 0 18 18"><path d="M2 6h3l4-4v14l-4-4H2z" fill="#fff" /><Alert /></svg>
            </TrayButton>
          </TrayIcons>
          <Clock>
            13:07
            <br />
            2025.08.26.
          </Clock>
          <ShowDesktop aria-label="Show desktop" />
        </Tray>
      </Taskbar>
    </Desktop>
  );
}
